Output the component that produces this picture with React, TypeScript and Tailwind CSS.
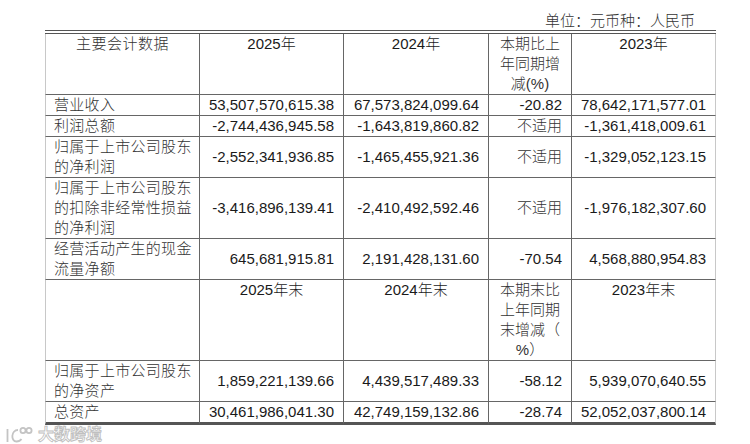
import React from "react";

type Row = {
  label: string[];
  values: string[];
};

const rowsTop: Row[] = [
  { label: ["营业收入"], values: ["53,507,570,615.38", "67,573,824,099.64", "-20.82", "78,642,171,577.01"] },
  { label: ["利润总额"], values: ["-2,744,436,945.58", "-1,643,819,860.82", "不适用", "-1,361,418,009.61"] },
  {
    label: ["归属于上市公司股东", "的净利润"],
    values: ["-2,552,341,936.85", "-1,465,455,921.36", "不适用", "-1,329,052,123.15"],
  },
  {
    label: ["归属于上市公司股东", "的扣除非经常性损益", "的净利润"],
    values: ["-3,416,896,139.41", "-2,410,492,592.46", "不适用", "-1,976,182,307.60"],
  },
  {
    label: ["经营活动产生的现金", "流量净额"],
    values: ["645,681,915.81", "2,191,428,131.60", "-70.54", "4,568,880,954.83"],
  },
];

const rowsBottom: Row[] = [
  {
    label: ["归属于上市公司股东", "的净资产"],
    values: ["1,859,221,139.66", "4,439,517,489.33", "-58.12", "5,939,070,640.55"],
  },
  { label: ["总资产"], values: ["30,461,986,041.30", "42,749,159,132.86", "-28.74", "52,052,037,800.14"] },
];

const cjk = "font-['Liberation_Sans','Noto_Sans_CJK_SC',sans-serif]";
const line = "border-b border-r border-[#666]";
const firstCell = "border-l border-l-[#c8c8c8]";
const lastCell = "border-r-[#c8c8c8]";

function Lines({ lines }: { lines: string[] }) {
  return (
    <>
      {lines.map((l, i) => (
        <div key={i} className="whitespace-nowrap">
          {l}
        </div>
      ))}
    </>
  );
}

function DataRow({ row, last }: { row: Row; last?: boolean }) {
  const b = last ? "border-b-[3px] border-b-[#555]" : "";
  return (
    <tr>
      <td className={`${line} ${firstCell} ${b} pl-[8px] align-middle text-[#333] font-light tracking-[0.3px]`}>
        <Lines lines={row.label} />
      </td>
      {row.values.map((v, i) => (
        <td
          key={i}
          className={`${line} ${b} ${i === 3 ? lastCell : ""} pr-[9px] text-right align-middle whitespace-nowrap ${
            v === "不适用" ? "text-[#333] font-light" : "text-[#1a1a1a]"
          }`}
        >
          {v}
        </td>
      ))}
    </tr>
  );
}

function HeaderRow({ years, change }: { years: string[]; change: string[] }) {
  return (
    <tr>
      <td className={`${line} ${firstCell} align-top text-center text-[#333] font-light tracking-[0.5px]`}>
        {years[0]}
      </td>
      <td className={`${line} align-top text-center text-[#1a1a1a] font-light`}>{years[1]}</td>
      <td className={`${line} align-top text-center text-[#1a1a1a] font-light`}>{years[2]}</td>
      <td className={`${line} align-top text-center text-[#333] font-light`}>
        <Lines lines={change} />
      </td>
      <td className={`${line} ${lastCell} align-top text-center text-[#1a1a1a] font-light`}>{years[3]}</td>
    </tr>
  );
}

function Watermark() {
  return (
    <div className="flex items-center gap-[5px] pl-[5px] h-[19px]">
      <svg width="28" height="18" viewBox="0 0 28 18" fill="none" stroke="#c4c4c4" strokeWidth="1.8">
        <path d="M2.5 3 L2.5 16" />
        <path d="M13 4 C6 4 5.5 15.5 11.5 15.5 C14 15.5 15.5 14.5 16.5 13" />
        <circle cx="18" cy="4.5" r="2.6" />
        <circle cx="24" cy="4.5" r="2.6" />
      </svg>
      <span
        className={`${cjk} text-[16px] leading-[18px] font-bold text-white [-webkit-text-stroke:0.9px_#c0c0c0]`}
      >
        大数跨境
      </span>
    </div>
  );
}

export default function App() {
  return (
    <div className={`w-[750px] h-[444px] bg-white overflow-hidden ${cjk} text-[15px] leading-[20px]`}>
      <div className="pt-[11px] pr-[55px] text-right leading-[19px] text-[#333] font-light">
        单位：元币种：人民币
      </div>
      <div className="ml-[45px] w-[671px] border-t-4 border-double border-[#555]">
        <table className="table-fixed w-[671px] border-separate border-spacing-0">
          <colgroup>
            <col className="w-[155px]" />
            <col className="w-[144px]" />
            <col className="w-[145px]" />
            <col className="w-[83px]" />
            <col className="w-[144px]" />
          </colgroup>
          <tbody>
            <HeaderRow years={["主要会计数据", "2025年", "2024年", "2023年"]} change={["本期比上", "年同期增", "减(%)"]} />
            {rowsTop.map((r, i) => (
              <DataRow key={i} row={r} />
            ))}
            <HeaderRow
              years={["", "2025年末", "2024年末", "2023年末"]}
              change={["本期末比", "上年同期", "末增减（", "%）"]}
            />
            {rowsBottom.map((r, i) => (
              <DataRow key={i} row={r} last={i === rowsBottom.length - 1} />
            ))}
          </tbody>
        </table>
      </div>
      <Watermark />
    </div>
  );
}
